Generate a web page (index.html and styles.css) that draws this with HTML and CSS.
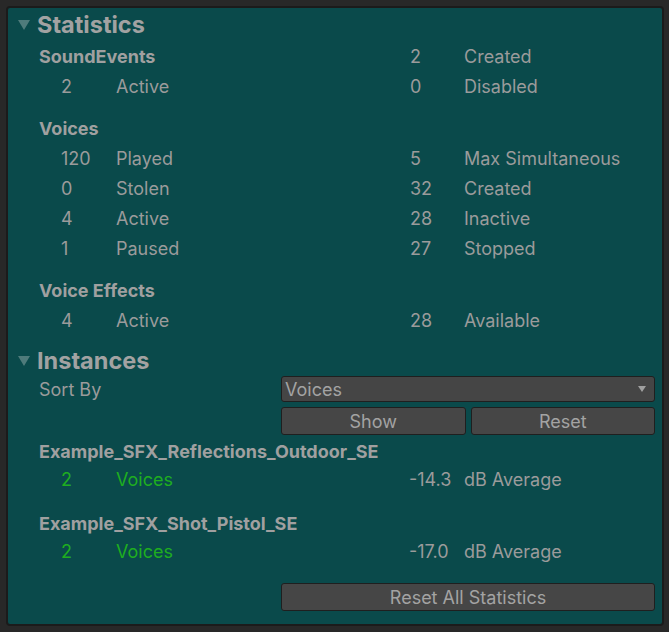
FILE: index.html
```html
<!DOCTYPE html>
<html>
<head>
<meta charset="utf-8">
<link rel="stylesheet" href="styles.css">
</head>
<body>
<div class="panel">
  <div class="foldout"><span class="tri"></span><span class="ftitle">Statistics</span></div>

  <div class="grid">
    <div class="head">SoundEvents</div><div class="n2">2</div><div class="l2">Created</div>
    <div class="n1">2</div><div class="l1">Active</div><div class="n2">0</div><div class="l2">Disabled</div>
  </div>

  <div class="grid sec">
    <div class="head">Voices</div><div class="n2"></div><div class="l2"></div>
    <div class="n1">120</div><div class="l1">Played</div><div class="n2">5</div><div class="l2">Max Simultaneous</div>
    <div class="n1">0</div><div class="l1">Stolen</div><div class="n2">32</div><div class="l2">Created</div>
    <div class="n1">4</div><div class="l1">Active</div><div class="n2">28</div><div class="l2">Inactive</div>
    <div class="n1">1</div><div class="l1">Paused</div><div class="n2">27</div><div class="l2">Stopped</div>
  </div>

  <div class="grid sec">
    <div class="head">Voice Effects</div><div class="n2"></div><div class="l2"></div>
    <div class="n1">4</div><div class="l1">Active</div><div class="n2">28</div><div class="l2">Available</div>
  </div>

  <div class="foldout f2"><span class="tri"></span><span class="ftitle">Instances</span></div>

  <div class="sortrow">
    <div class="sortlabel">Sort By</div>
    <div class="dropdown"><span>Voices</span><span class="arrow"></span></div>
  </div>
  <div class="btnrow">
    <div class="btn">Show</div>
    <div class="btn">Reset</div>
  </div>

  <div class="inst">
    <div class="iname">Example_SFX_Reflections_Outdoor_SE</div>
    <div class="irow"><span class="n1 green">2</span><span class="l1 green">Voices</span><span class="db">-14.3</span><span class="l2">dB Average</span></div>
  </div>
  <div class="inst i2">
    <div class="iname">Example_SFX_Shot_Pistol_SE</div>
    <div class="irow"><span class="n1 green">2</span><span class="l1 green">Voices</span><span class="db">-17.0</span><span class="l2">dB Average</span></div>
  </div>

  <div class="bottom">
    <div class="btn wide">Reset All Statistics</div>
  </div>
</div>
</body>
</html>
```
FILE: styles.css
```css
html, body {
  margin: 0;
  padding: 0;
  background: #282828;
}
body {
  width: 669px;
  height: 632px;
  overflow: hidden;
  font-family: Inter, "Noto Sans", sans-serif;
  color: #9b9b9b;
  font-size: 18px;
}
.panel {
  margin: 6px 5px 0 6px;
  height: 620px;
  box-sizing: border-box;
  border: 2px solid #1b1b1b;
  border-radius: 4px;
  background: #0a4a4b;
  padding: 0 7px 0 0;
}
.foldout {
  height: 33px;
  display: flex;
  align-items: center;
  padding-left: 10px;
}
.foldout.f2 {
  margin-top: 9px;
  height: 32px;
}
.tri {
  width: 0;
  height: 0;
  border-left: 6px solid transparent;
  border-right: 6px solid transparent;
  border-top: 10px solid #4f7b7b;
  margin-right: 7px;
  margin-top: 1px;
}
.ftitle {
  font-weight: 700;
  font-size: 23.5px;
  color: #a2a2a2;
}
.grid {
  display: grid;
  grid-template-columns: 22px 55px 294px 54px 1fr;
  grid-auto-rows: 30px;
  align-items: center;
  padding-left: 31px;
}
.grid.sec {
  margin-top: 12px;
}
.head {
  grid-column: 1 / 4;
  font-weight: 700;
  font-size: 18px;
  color: #a0a0a0;
}
.grid .n1 { grid-column: 2; }
.grid .l1 { grid-column: 3; }
.grid .n2 { grid-column: 4; }
.grid .l2 { grid-column: 5; white-space: nowrap; }

.sortrow {
  display: flex;
  align-items: center;
  height: 26px;
  padding-left: 31px;
}
.sortlabel {
  width: 242px;
}
.dropdown {
  flex: 1;
  height: 26px;
  box-sizing: border-box;
  background: #454545;
  border: 1px solid #1f1f1f;
  border-radius: 3px;
  display: flex;
  align-items: center;
  justify-content: space-between;
  padding: 0 8px 0 3px;
  color: #a3a3a3;
}
.arrow {
  width: 0;
  height: 0;
  border-left: 4.5px solid transparent;
  border-right: 4.5px solid transparent;
  border-top: 6px solid #a0a0a0;
}
.btnrow {
  display: flex;
  gap: 5px;
  margin-top: 5px;
  padding-left: 273px;
}
.btn {
  flex: 1;
  height: 28px;
  box-sizing: border-box;
  background: #464646;
  border: 1px solid #1f1f1f;
  border-radius: 3px;
  display: flex;
  align-items: center;
  justify-content: center;
  color: #a3a3a3;
}
.inst {
  margin-top: 2px;
  padding-left: 31px;
}
.inst.i2 {
  margin-top: 16px;
}
.iname {
  height: 28px;
  display: flex;
  align-items: center;
  font-weight: 700;
  font-size: 18px;
  color: #a0a0a0;
  white-space: nowrap;
}
.irow {
  height: 28px;
  display: flex;
  align-items: center;
  padding-left: 22px;
}
.irow .n1 { width: 55px; }
.irow .l1 { width: 293px; }
.irow .db { width: 55px; }
.green { color: #1fae1f; }
.bottom {
  margin-top: 18px;
  padding-left: 273px;
  display: flex;
}
```
